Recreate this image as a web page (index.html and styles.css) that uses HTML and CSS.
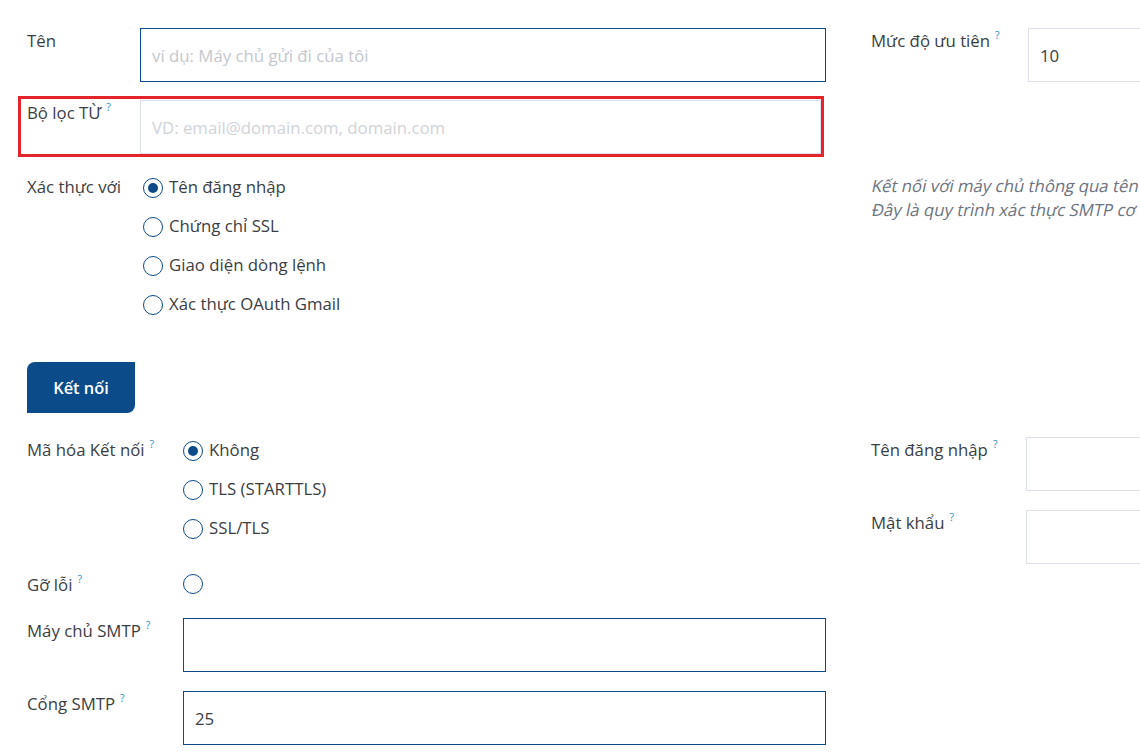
FILE: index.html
```html
<!DOCTYPE html>
<html lang="vi">
<head>
<meta charset="utf-8">
<title>Máy chủ gửi thư</title>
<link rel="stylesheet" href="styles.css">
</head>
<body>
<div class="form">
  <div class="group">
    <div class="col">
      <div class="row">
        <label class="lbl lbl-top">Tên</label>
        <input class="field active" type="text" placeholder="ví dụ: Máy chủ gửi đi của tôi">
      </div>
      <div class="highlight">
        <div class="row">
          <label class="lbl lbl-top">Bộ lọc TỪ<sup class="help">?</sup></label>
          <input class="field field-light" type="text" placeholder="VD: email@domain.com, domain.com">
        </div>
      </div>
      <div class="row row-auth">
        <label class="lbl lbl-top">Xác thực với</label>
        <div class="options options-top">
          <div class="option"><span class="radio checked"></span><span>Tên đăng nhập</span></div>
          <div class="option"><span class="radio"></span><span>Chứng chỉ SSL</span></div>
          <div class="option"><span class="radio"></span><span>Giao diện dòng lệnh</span></div>
          <div class="option"><span class="radio"></span><span>Xác thực OAuth Gmail</span></div>
        </div>
      </div>
    </div>
    <div class="col">
      <div class="row">
        <label class="lbl lbl-r1">Mức độ ưu tiên<sup class="help">?</sup></label>
        <input class="field" type="text" value="10">
      </div>
      <div class="desc">
        <span class="desc-line">Kết nối với máy chủ thông qua tên</span>
        <span class="desc-line">Đây là quy trình xác thực SMTP cơ</span>
      </div>
    </div>
  </div>

  <button class="btn" type="button">Kết nối</button>

  <div class="group group-bottom">
    <div class="col">
      <div class="row">
        <label class="lbl lbl-bottom">Mã hóa Kết nối<sup class="help">?</sup></label>
        <div class="options">
          <div class="option"><span class="radio checked"></span><span>Không</span></div>
          <div class="option"><span class="radio"></span><span>TLS (STARTTLS)</span></div>
          <div class="option"><span class="radio"></span><span>SSL/TLS</span></div>
        </div>
      </div>
      <div class="row row-debug">
        <label class="lbl lbl-bottom">Gỡ lỗi<sup class="help">?</sup></label>
        <div class="options">
          <div class="option"><span class="radio"></span></div>
        </div>
      </div>
      <div class="row row-smtp">
        <label class="lbl lbl-bottom">Máy chủ SMTP<sup class="help">?</sup></label>
        <input class="field active" type="text">
      </div>
      <div class="row row-port">
        <label class="lbl lbl-bottom">Cổng SMTP<sup class="help">?</sup></label>
        <input class="field active" type="text" value="25">
      </div>
    </div>
    <div class="col">
      <div class="row">
        <label class="lbl lbl-r2">Tên đăng nhập<sup class="help">?</sup></label>
        <input class="field" type="text">
      </div>
      <div class="row row-pass">
        <label class="lbl lbl-r2">Mật khẩu<sup class="help">?</sup></label>
        <input class="field" type="password">
      </div>
    </div>
  </div>
</div>
</body>
</html>
```
FILE: styles.css
```css
html, body {
  margin: 0;
  padding: 0;
  background: #ffffff;
}

body {
  width: 1140px;
  height: 752px;
  overflow: hidden;
  font-family: "Open Sans", "Noto Sans", sans-serif;
  font-size: 16.8px;
  color: #3a3e43;
}

.form {
  padding: 28px 0 0 27px;
}

.group {
  display: grid;
  grid-template-columns: 799px 420px;
  column-gap: 45px;
  align-items: start;
}

.group-bottom {
  margin-top: 24px;
}

.col {
  display: flex;
  flex-direction: column;
}

.row {
  display: flex;
  align-items: flex-start;
}

.lbl {
  flex: none;
  line-height: 24px;
  padding-top: 1px;
  white-space: nowrap;
}

.lbl-top { width: 113px; }
.lbl-bottom { width: 156px; }
.lbl-r1 { width: 157px; }
.lbl-r2 { width: 155px; }

.help {
  font-size: 10.5px;
  line-height: 0;
  vertical-align: 8px;
  margin-left: 5px;
  color: #2a8fc2;
}

.field {
  flex: 1 1 auto;
  min-width: 0;
  height: 54px;
  box-sizing: border-box;
  margin: 0;
  padding: 0 11px;
  border: 1px solid #dfe0ed;
  border-radius: 0;
  background: #fff;
  font-family: inherit;
  font-size: 16.8px;
  color: #3a3e43;
  outline: none;
}

.field::placeholder {
  color: #c4c8ce;
  opacity: 1;
}

.field-light::placeholder {
  color: #d0d4d9;
}

.field.active {
  border-color: #0c4a88;
}

.highlight {
  margin: 14px 2px -3px -9px;
  padding: 1px 0 0 6px;
  border: 3px solid #e3242b;
}

.row-auth { margin-top: 20px; }

.options {
  display: flex;
  flex-direction: column;
  gap: 15px;
  padding-top: 1px;
}

.options-top {
  padding-left: 3px;
}

.option {
  display: flex;
  align-items: center;
  gap: 6px;
  line-height: 24px;
  white-space: nowrap;
}

.radio {
  flex: none;
  width: 20px;
  height: 20px;
  box-sizing: border-box;
  border: 1.5px solid #0c4a88;
  border-radius: 50%;
  display: flex;
  align-items: center;
  justify-content: center;
  margin-top: 1px;
}

.radio.checked::after {
  content: "";
  width: 10px;
  height: 10px;
  border-radius: 50%;
  background: #0c4a88;
}

.desc {
  margin-top: 92px;
  display: flex;
  flex-direction: column;
  align-items: flex-start;
  color: #6b7280;
  line-height: 24px;
  white-space: nowrap;
}

.desc-line {
  display: inline-block;
  transform: skewX(-12deg);
  transform-origin: 0 70%;
}

.btn {
  display: block;
  margin: 46px 0 0 0;
  width: 108px;
  height: 51px;
  padding: 0;
  border: none;
  border-radius: 8px 0 8px 0;
  background: #0c4b8a;
  color: #ffffff;
  font-family: inherit;
  font-size: 16.4px;
  font-weight: 600;
  cursor: pointer;
}

.row-debug { margin-top: 32px; }
.row-smtp { margin-top: 21px; }
.row-port { margin-top: 19px; }
.row-pass { margin-top: 19px; }
```
